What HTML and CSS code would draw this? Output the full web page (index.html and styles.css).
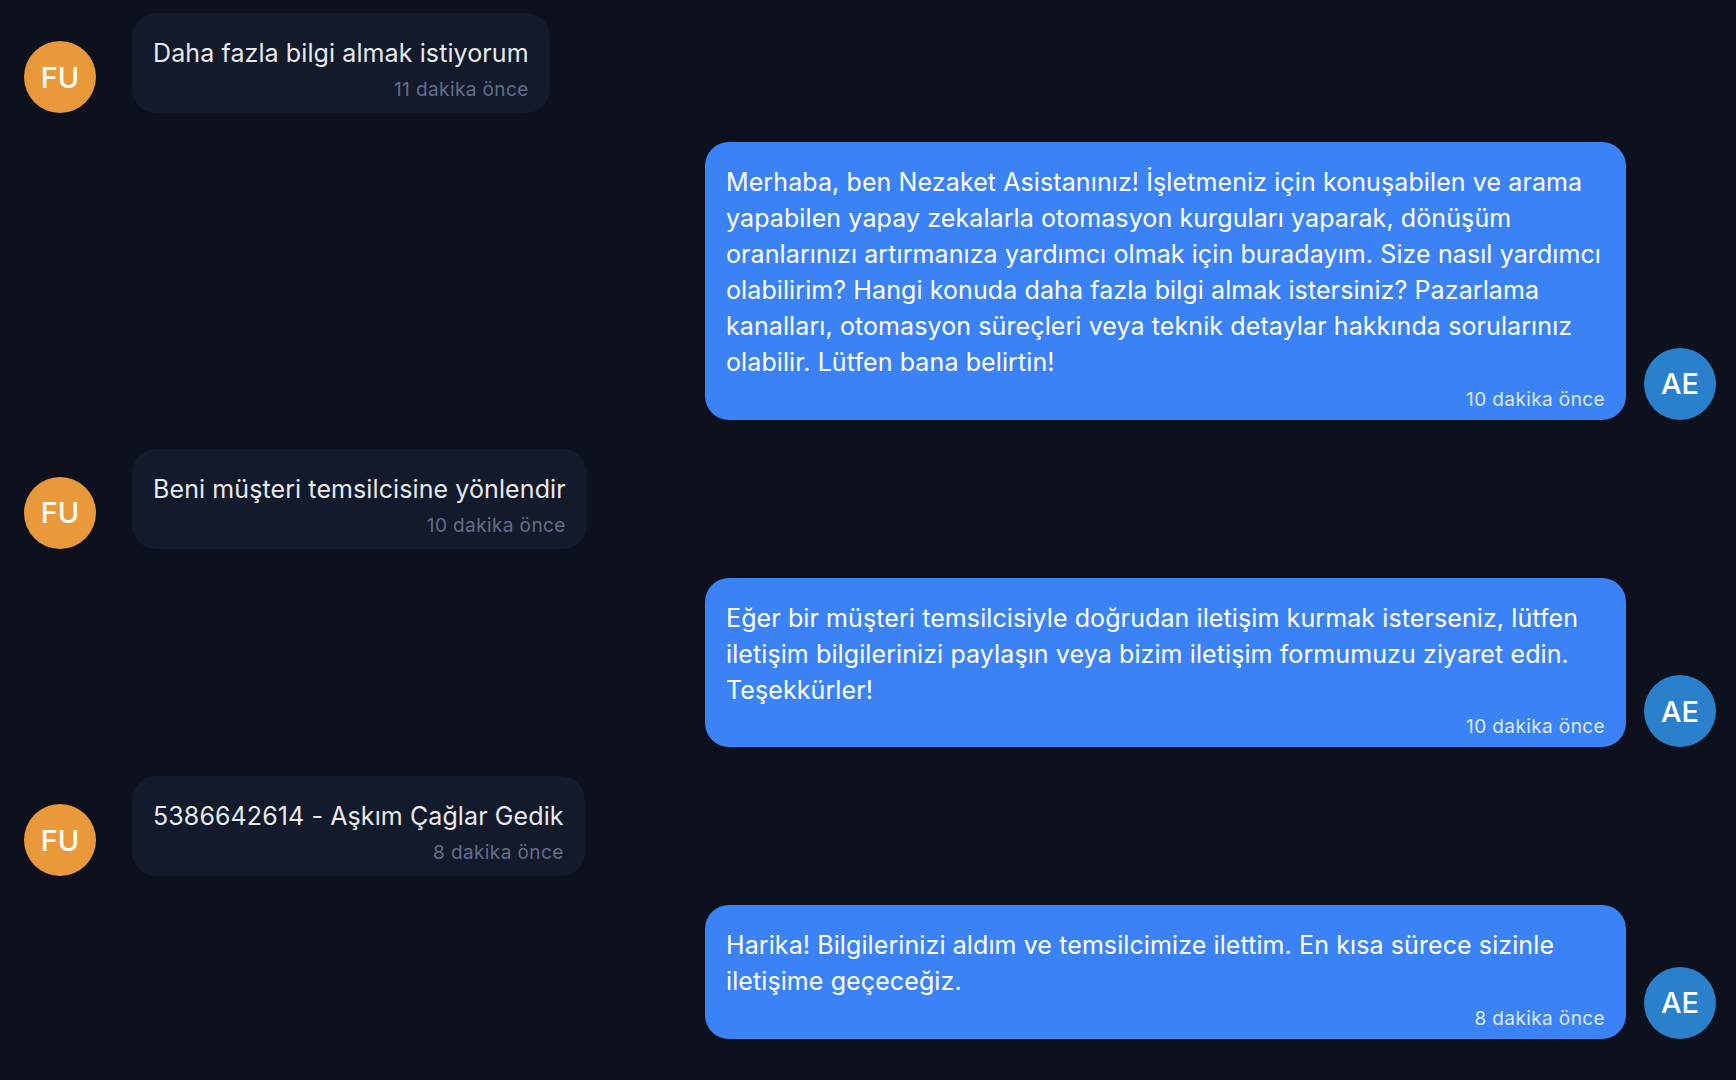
FILE: index.html
```html
<!DOCTYPE html>
<html lang="tr">
<head>
<meta charset="utf-8">
<title>Sohbet</title>
<link rel="stylesheet" href="styles.css">
</head>
<body>
<main class="chat">
  <div class="row row-user">
    <div class="avatar avatar-user">FU</div>
    <div class="bubble bubble-user">
      <p class="msg">Daha fazla bilgi almak istiyorum</p>
      <div class="time time-user">11 dakika önce</div>
    </div>
  </div>

  <div class="row row-bot">
    <div class="bubble bubble-bot">
      <p class="msg">Merhaba, ben Nezaket Asistanınız! İşletmeniz için konuşabilen ve arama yapabilen yapay zekalarla otomasyon kurguları yaparak, dönüşüm oranlarınızı artırmanıza yardımcı olmak için buradayım. Size nasıl yardımcı olabilirim? Hangi konuda daha fazla bilgi almak istersiniz? Pazarlama kanalları, otomasyon süreçleri veya teknik detaylar hakkında sorularınız olabilir. Lütfen bana belirtin!</p>
      <div class="time time-bot">10 dakika önce</div>
    </div>
    <div class="avatar avatar-bot">AE</div>
  </div>

  <div class="row row-user">
    <div class="avatar avatar-user">FU</div>
    <div class="bubble bubble-user">
      <p class="msg">Beni müşteri temsilcisine yönlendir</p>
      <div class="time time-user">10 dakika önce</div>
    </div>
  </div>

  <div class="row row-bot">
    <div class="bubble bubble-bot">
      <p class="msg">Eğer bir müşteri temsilcisiyle doğrudan iletişim kurmak isterseniz, lütfen iletişim bilgilerinizi paylaşın veya bizim iletişim formumuzu ziyaret edin. Teşekkürler!</p>
      <div class="time time-bot">10 dakika önce</div>
    </div>
    <div class="avatar avatar-bot">AE</div>
  </div>

  <div class="row row-user">
    <div class="avatar avatar-user">FU</div>
    <div class="bubble bubble-user">
      <p class="msg">5386642614 - Aşkım Çağlar Gedik</p>
      <div class="time time-user">8 dakika önce</div>
    </div>
  </div>

  <div class="row row-bot">
    <div class="bubble bubble-bot">
      <p class="msg">Harika! Bilgilerinizi aldım ve temsilcimize ilettim. En kısa sürece sizinle iletişime geçeceğiz.</p>
      <div class="time time-bot">8 dakika önce</div>
    </div>
    <div class="avatar avatar-bot">AE</div>
  </div>
</main>
</body>
</html>
```

FILE: styles.css
```css
* {
  box-sizing: border-box;
}

html, body {
  margin: 0;
  padding: 0;
  background: #0c111d;
  height: 100%;
  overflow: hidden;
}

body {
  font-family: Inter, "Noto Sans", "Liberation Sans", sans-serif;
  color: #e5e7eb;
}

.chat {
  display: flex;
  flex-direction: column;
  gap: 29px;
  padding: 13px 20px 0 24px;
}

.row {
  display: flex;
  align-items: flex-end;
}

.row-user {
  justify-content: flex-start;
  gap: 36px;
}

.row-bot {
  justify-content: flex-end;
  gap: 18px;
}

.avatar {
  flex: 0 0 72px;
  width: 72px;
  height: 72px;
  border-radius: 50%;
  display: flex;
  align-items: center;
  justify-content: center;
  font-size: 29px;
  font-weight: 500;
  color: #ffffff;
  line-height: 1;
}

.avatar-user {
  background: #e9993a;
}

.avatar-bot {
  background: #2b80cc;
}

.bubble {
  border-radius: 24px;
  padding: 22px 21px 11px 21px;
  max-width: 921px;
}

.bubble-user {
  background: #131a2b;
  color: #e8eaef;
}

.bubble-bot {
  background: #3b82f6;
  color: #ffffff;
  padding-bottom: 8px;
}

.msg {
  margin: 0;
  font-size: 25px;
  letter-spacing: 0.1px;
  line-height: 36px;
}

.time {
  margin-top: 7px;
  font-size: 19px;
  letter-spacing: 0.4px;
  line-height: 24px;
  text-align: right;
}

.time-user {
  color: #626e89;
}

.time-bot {
  color: #dde8fd;
  margin-top: 7.5px;
}
```
